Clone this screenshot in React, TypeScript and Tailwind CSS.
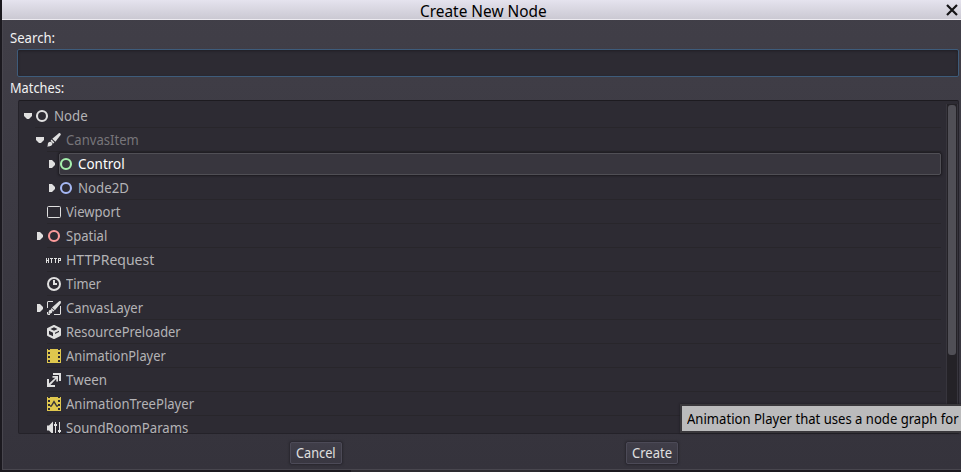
import { useLayoutEffect, useRef, useState, type ReactNode } from "react";

/* Condenses a label horizontally so it fills exactly `w` pixels. */
function Label({ children, w, className = "" }: { children: string; w: number; className?: string }) {
  const ref = useRef<HTMLSpanElement>(null);
  const [scale, setScale] = useState(1);
  useLayoutEffect(() => {
    if (ref.current) setScale(w / ref.current.offsetWidth);
  }, [w]);
  return (
    <span className={`block shrink-0 whitespace-nowrap ${className}`} style={{ width: w }}>
      <span ref={ref} className="inline-block origin-left" style={{ transform: `scaleX(${scale})` }}>
        {children}
      </span>
    </span>
  );
}

function Ring({ color }: { color: string }) {
  return <circle cx="8" cy="8" r="5" fill="none" stroke={color} strokeWidth="2.1" />;
}

const W = "#e0e0e0";
const Y = "#dfc74e";

const film = (
  <path
    fill={Y}
    fillRule="evenodd"
    d="M1 1h14v14H1zM2 1v1h2V1zM2 4v2h2V4zM2 8v2h2V8zM2 12v2h2v-2zM12 1v1h2V1zM12 4v2h2V4zM12 8v2h2V8zM12 12v2h2v-2z"
  />
);

const icons: Record<string, ReactNode> = {
  node: <Ring color={W} />,
  control: <Ring color="#a5efac" />,
  node2d: <Ring color="#a5b7f3" />,
  spatial: <Ring color="#fc9c9c" />,
  brush: (
    <g fill={W}>
      <path d="M12.8 1.3c1.1-.7 2.5.7 1.8 1.8L9.4 9.7 6.3 6.7z" />
      <path d="M5.6 7.6l2.8 2.8-1.2 1-2.6-2.6z" />
      <path d="M4.1 9.8c1.5 0 2.5 1 2.3 2.3-.2 1.8-2.2 2.5-5.4 2.3.9-.6.7-1.2.8-2.2.1-1.4 1-2.4 2.3-2.4z" />
    </g>
  ),
  viewport: <rect x="1.5" y="2.5" width="13" height="11" rx="1" fill="none" stroke={W} />,
  http: (
    <path
      fill={W}
      d="M0 6h1v2h1V6h1v5H2V9H1v2H0zM4 6h3v1H6v4H5V7H4zM8 6h3v1h-1v4H9V7H8zM12 6h3v3h-2v2h-1zM13 7v1h1V7z"
      fillRule="evenodd"
    />
  ),
  timer: (
    <g>
      <circle cx="8" cy="8" r="6" fill="none" stroke={W} strokeWidth="2" />
      <path d="M7 4h2v3h2v2H7z" fill={W} />
    </g>
  ),
  layer: (
    <g fill={W}>
      <path d="M1 2l1-1h5v1H2v6H1zM14 6h1v8l-1 1H8v-1h6zM1 12h1v2h2v1H2l-1-1z" />
      <path d="M13.4 1L15 1.2l-.2 2L8.9 10.2 6 7.6zM5.6 8.1l2.8 2.6-1.2.9-2.4-2.2z" />
      <path d="M4.4 9.7c1.4 0 2.1.9 1.9 2-.2 1.6-1.8 2.1-4.2 2 .7-.5.5-1 .6-1.9.1-1.4.7-2.1 1.7-2.1z" />
    </g>
  ),
  cube: (
    <g fill="none" stroke={W} strokeWidth="2" strokeLinejoin="round">
      <path d="M8 2l6 3v6l-6 3-6-3V5z" />
      <path d="M2 5l6 3 6-3M8 8v6" />
      <path d="M9 10l4-2v3.4l-4 2z" fill={W} stroke="none" />
    </g>
  ),
  film,
  tree: (
    <g>
      {film}
      <path d="M4 10h1.3L8 5.6 10.7 10H12" fill="none" stroke="#37343a" strokeWidth="1.4" />
    </g>
  ),
  tween: (
    <path fill={W} d="M7 1h8v8h-2V3H7zM1 7h2v4.6L9.3 5.7H6.5V4H12v5.5h-1.7V6.7L4.4 13H9v2H1z" />
  ),
  sound: (
    <path fill={W} d="M1 5.5h2l4-4v13l-4-4H1zM9 2h1v2h1v2h-1v8H9V6H8V4h1zM13 2h1v8h1v2h-1v2h-1v-2h-1v-2h1z" />
  ),
};

type Item = { name: string; icon: string; w: number; depth: number; arrow?: "down" | "right"; dim?: boolean; selected?: boolean };

const items: Item[] = [
  { name: "Node", icon: "node", w: 34, depth: 0, arrow: "down" },
  { name: "CanvasItem", icon: "brush", w: 73, depth: 1, arrow: "down", dim: true },
  { name: "Control", icon: "control", w: 47, depth: 2, arrow: "right", selected: true },
  { name: "Node2D", icon: "node2d", w: 51, depth: 2, arrow: "right" },
  { name: "Viewport", icon: "viewport", w: 55, depth: 1 },
  { name: "Spatial", icon: "spatial", w: 41, depth: 1, arrow: "right" },
  { name: "HTTPRequest", icon: "http", w: 88, depth: 1 },
  { name: "Timer", icon: "timer", w: 35, depth: 1 },
  { name: "CanvasLayer", icon: "layer", w: 77, depth: 1, arrow: "right" },
  { name: "ResourcePreloader", icon: "cube", w: 115, depth: 1 },
  { name: "AnimationPlayer", icon: "film", w: 100, depth: 1 },
  { name: "Tween", icon: "tween", w: 41, depth: 1 },
  { name: "AnimationTreePlayer", icon: "tree", w: 128, depth: 1 },
  { name: "SoundRoomParams", icon: "sound", w: 122, depth: 1 },
];

const indent = ["pl-[3px]", "pl-[15px]", "pl-[27px]"];

function Row({ item }: { item: Item }) {
  const tone = item.selected ? "text-white" : item.dim ? "text-[#77757a]" : "text-[#b4b3b6]";
  return (
    <div className={`flex h-6 shrink-0 ${indent[item.depth]}`}>
      <div className="flex w-[13px] shrink-0 items-center">
        {item.arrow && (
          <svg width="12" height="12" viewBox="0 0 12 12" fill={W}>
            {item.arrow === "down" ? <path d="M2 3h8v3L7 9H5L2 6z" /> : <path d="M3 2h3l3 3v2l-3 3H3z" />}
          </svg>
        )}
      </div>
      <div
        className={`flex grow items-center ${
          item.selected
            ? "my-px h-[22px] rounded-xs border border-[#504f55] bg-[#38363e] shadow-[0_0_2px_1px_#1d1b20]"
            : "border-b border-[#28262b] pt-px pl-px"
        }`}
      >
        <svg width="16" height="16" viewBox="0 0 16 16" className="-ml-[2px] shrink-0">
          {icons[item.icon]}
        </svg>
        <Label w={item.w} className={`ml-1 leading-5 ${tone}`}>
          {item.name}
        </Label>
      </div>
    </div>
  );
}

function Button({ children, w }: { children: string; w: number }) {
  return (
    <button className="flex h-[22px] w-[52px] items-center justify-center rounded-xs border border-[#4c4a57] bg-linear-to-b from-[#403e49] to-[#393741] text-[#e0e0e0] shadow-[0_0_2px_1px_#28262e]">
      <Label w={w}>{children}</Label>
    </button>
  );
}

export default function App() {
  return (
    <div className="relative flex h-[472px] w-[961px] flex-col overflow-hidden bg-[#1b191f] pl-0.5 font-['Noto_Sans','Open_Sans',sans-serif] text-[14px] leading-5">
      <div className="flex h-[470px] shrink-0 flex-col border-b border-l border-[#48464e] bg-linear-to-b from-[#413f48] to-[#35333c]">
        <header className="-ml-px flex h-5 shrink-0 items-center border-b border-[#eceaf0] bg-linear-to-b from-[#e5e3ee] to-[#cbc9d3] text-[16px] text-black">
          <Label w={127} className="ml-[418px] mt-[3px]">Create New Node</Label>
          <svg width="12" height="12" viewBox="0 0 12 12" className="ml-auto mr-[3px]" stroke="#151416" strokeWidth="2.2">
            <path d="M1 1l10 10M11 1L1 11" />
          </svg>
        </header>
        <Label w={45} className="ml-[7px] mt-2 text-[#f2f2f2]">Search:</Label>
        <input className="ml-[14px] mt-[1px] h-7 w-[942px] shrink-0 rounded-xs border border-[#3e5c7b] bg-[#2d2b33] shadow-[inset_0_1px_3px_#201e24] outline-none" />
        <Label w={54} className="ml-[7px] mt-[1px] text-[#f2f2f2]">Matches:</Label>
        <div className="ml-[15px] mt-[2px] flex h-[334px] w-[941px] shrink-0 overflow-hidden rounded-xs border border-[#242229] border-t-[#1d1b20] bg-[#2d2b33]">
          <div className="flex w-[922px] shrink-0 flex-col pt-[3px]">
            {items.map((item) => (
              <Row key={item.name} item={item} />
            ))}
          </div>
          <div className="ml-[5px] mt-[3px] flex w-3 justify-center border-x border-[#37353d] bg-[#242227]">
            <div className="mt-px h-[250px] w-2 rounded-[3px] bg-[#504f56]" />
          </div>
        </div>
        <div className="mt-2 flex pl-[287px]">
          <Button w={40}>Cancel</Button>
          <div className="w-[284px]" />
          <Button w={40}>Create</Button>
        </div>
      </div>
      <div className="flex h-0.5 shrink-0">
        <div className="ml-[349px] h-0.5 w-[189px] bg-[#2d2b30]" />
      </div>
      <div className="absolute left-[680px] top-[404px] flex h-[29px] w-[300px] items-center border-2 border-[#39373b] bg-[#bbbbbc] pt-px pl-[5px] text-black shadow-[0_0_2px_#1b191f]">
        <Label w={272}>Animation Player that uses a node graph for</Label>
      </div>
    </div>
  );
}
